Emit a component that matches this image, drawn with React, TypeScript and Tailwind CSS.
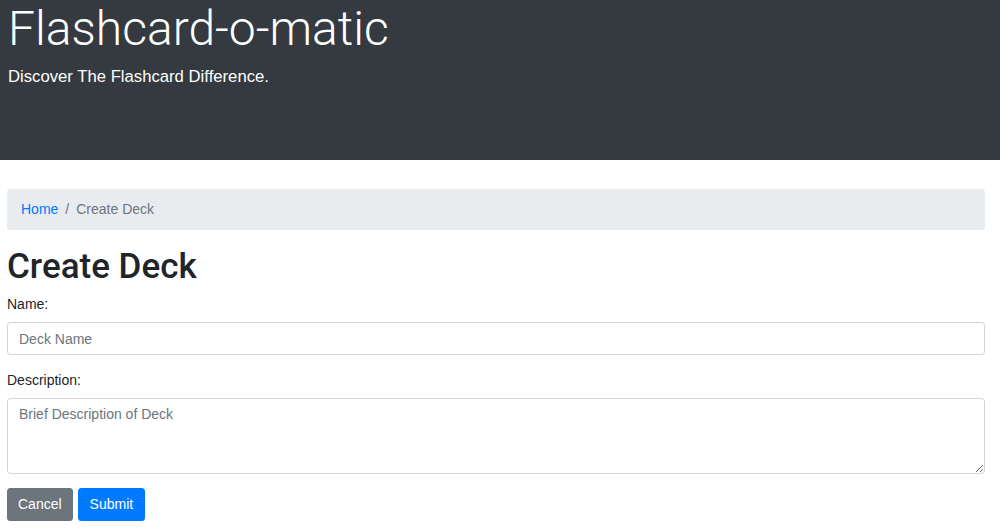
export default function App() {
  return (
    <div className="min-h-[528px] bg-white text-[14px] leading-[1.5] text-[#212529] [font-family:'Liberation_Sans',Arial,sans-serif]">
      <header className="flex h-[160px] flex-col bg-[#343a40] px-[8px] text-white">
        <h1 className="text-[48px] font-light leading-[1.2] [font-family:Roboto,'Liberation_Sans',sans-serif]">
          Flashcard-o-matic
        </h1>
        <p className="mt-[6px] text-[16.7px] leading-[1.5]">Discover The Flashcard Difference.</p>
      </header>

      <main className="ml-[7px] mr-[15px]">
        <nav className="mt-[29px] flex h-[41px] items-center rounded-[3.5px] bg-[#e9ecef] px-[14px]">
          <a href="#" className="text-[#007bff]">
            Home
          </a>
          <span className="px-[7px] text-[#6c757d]">/</span>
          <span className="text-[#6c757d]">Create Deck</span>
        </nav>

        <h2 className="mt-[16px] mb-[6px] text-[35px] font-medium leading-[1.2] [font-family:Roboto,'Liberation_Sans',sans-serif]">
          Create Deck
        </h2>

        <form className="flex flex-col">
          <label className="mb-[7px] block">Name:</label>
          <input
            type="text"
            placeholder="Deck Name"
            className="h-[33px] w-full rounded-[3.5px] border border-[#ced4da] px-[11px] text-[14px] placeholder:text-[#6c757d]"
          />
          <label className="mt-[15px] mb-[7px] block">Description:</label>
          <textarea
            placeholder="Brief Description of Deck"
            className="h-[76px] w-full rounded-[3.5px] border border-[#ced4da] px-[11px] py-[5px] text-[14px] placeholder:text-[#6c757d]"
          />
          <div className="mt-[14px] flex gap-[5px]">
            <button type="button" className="h-[33px] rounded-[3.5px] bg-[#6c757d] px-[11px] text-white">
              Cancel
            </button>
            <button type="submit" className="h-[33px] rounded-[3.5px] bg-[#007bff] px-[12px] text-white">
              Submit
            </button>
          </div>
        </form>
      </main>
    </div>
  )
}
